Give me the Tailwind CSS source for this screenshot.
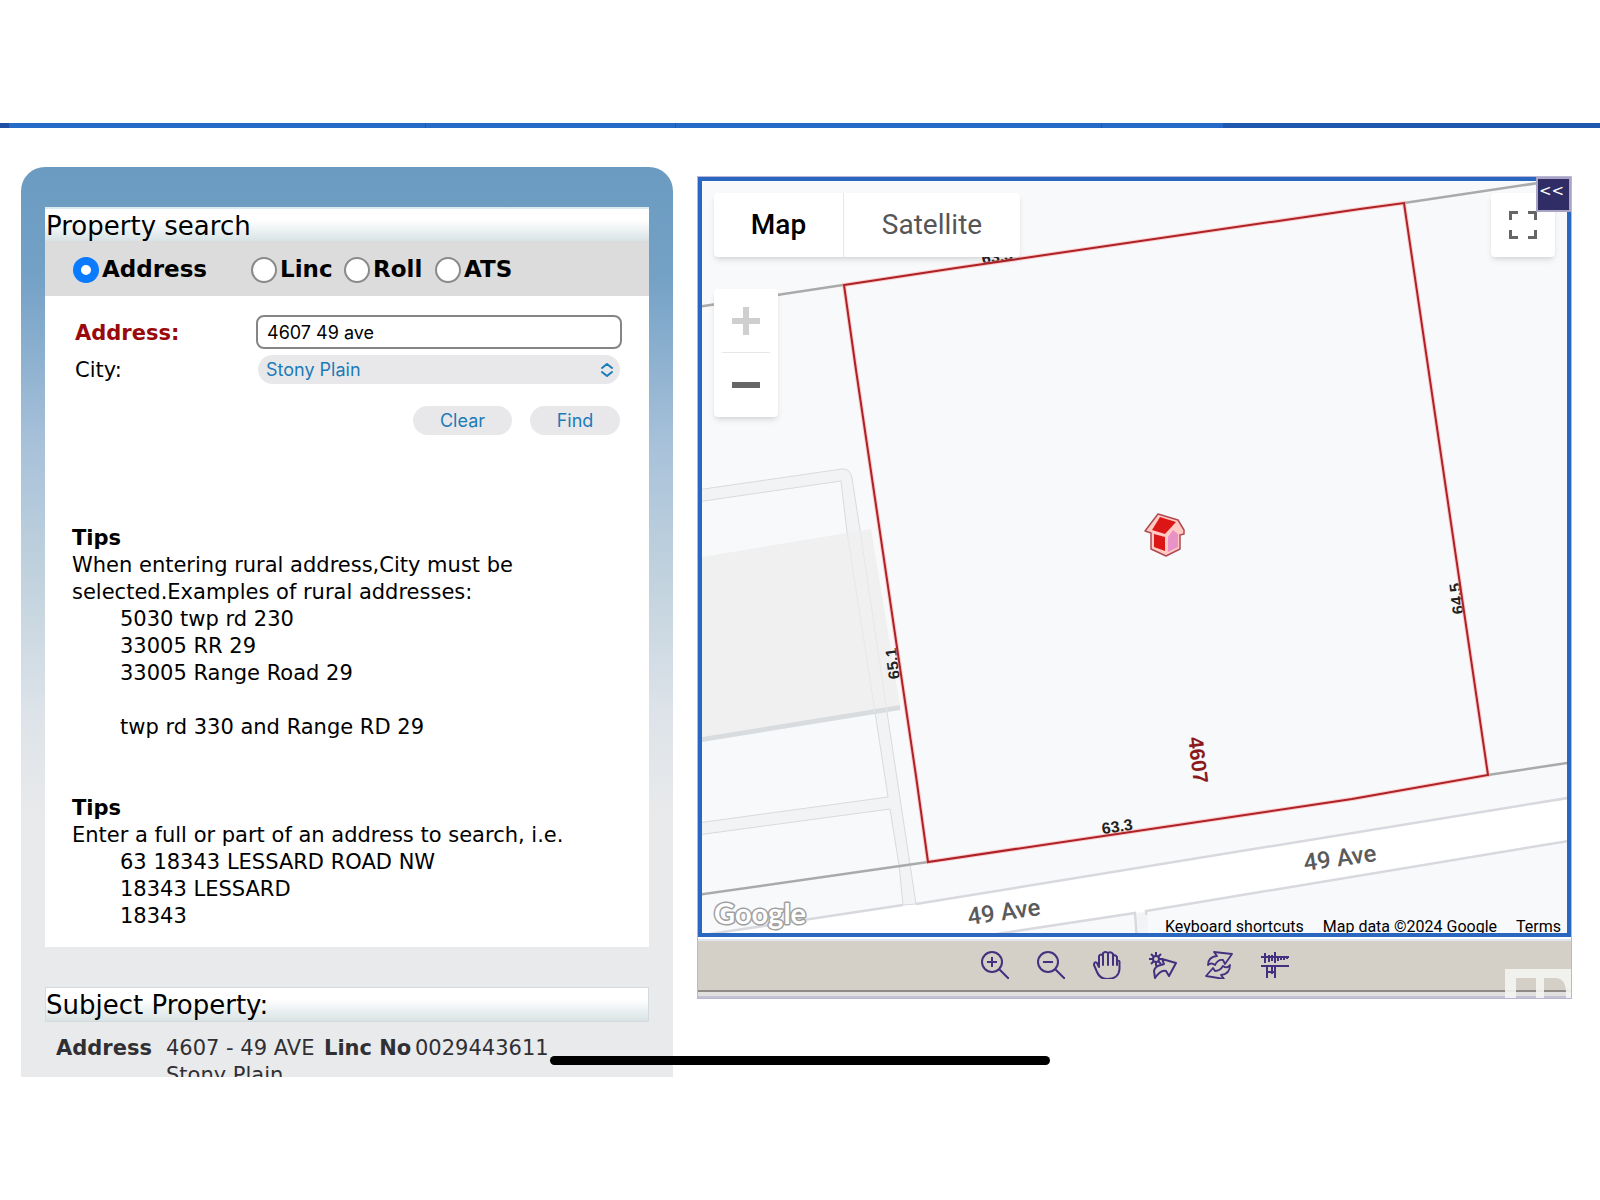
<!DOCTYPE html>
<html lang="en">
<head>
    <meta charset="UTF-8">
    <meta name="viewport" content="width=device-width, initial-scale=1.0">
    <title>Property search</title>
    <script src="https://cdn.jsdelivr.net/npm/@tailwindcss/browser@4"></script>
</head>
<body class="min-h-screen bg-white font-['DejaVu_Sans',sans-serif] text-black">
    <!-- Top strip -->
    <header class="pt-[123px]">
        <div class="flex h-[5px] bg-[#266ac8]">
            <div class="w-[9px] bg-[#1f4fa3]"></div>
            <div class="w-[417px] border-r border-[#1f58b0]"></div>
            <div class="w-[250px] border-r border-[#1f58b0]"></div>
            <div class="w-[426px] border-r border-[#1f58b0]"></div>
            <div class="w-[121px]"></div>
            <div class="flex-1 bg-[#1f56ae]"></div>
        </div>
    </header>

    <main class="relative grid grid-cols-[652fr_875fr] items-start gap-6 pt-[39px] pr-7 pl-[21px]">
        <!-- Search panel -->
        <section class="h-[910px] overflow-hidden rounded-t-3xl bg-[linear-gradient(180deg,#6b9bc1_0%,#74a1c6_12%,#a9c2da_31%,#bfd1dd_44%,#dde3e9_60%,#e9eaeb_72%)] px-6 pt-10">
            <form class="bg-white" onsubmit="return false">
                <h1 class="h-[34px] border-t-2 border-[#dcebf2] bg-linear-to-b from-white from-35% to-[#d8e3e5] pl-px text-[26px] leading-[34px]">Property search</h1>
                <div class="flex h-[55px] items-center bg-[#dcdcdc] pt-0.5 pl-7 text-[23px] font-bold">
                    <label class="flex w-[178px] items-center gap-[3px]">
                        <input type="radio" name="kind" checked class="size-[26px] appearance-none rounded-full border-2 border-[#8a8a8a] bg-white checked:border-8 checked:border-[#0a7aff]">Address
                    </label>
                    <label class="flex w-[93px] items-center gap-[3px]">
                        <input type="radio" name="kind" class="size-[26px] appearance-none rounded-full border-2 border-[#8a8a8a] bg-white checked:border-8 checked:border-[#0a7aff]">Linc
                    </label>
                    <label class="flex w-[91px] items-center gap-[3px]">
                        <input type="radio" name="kind" class="size-[26px] appearance-none rounded-full border-2 border-[#8a8a8a] bg-white checked:border-8 checked:border-[#0a7aff]">Roll
                    </label>
                    <label class="flex items-center gap-[3px]">
                        <input type="radio" name="kind" class="size-[26px] appearance-none rounded-full border-2 border-[#8a8a8a] bg-white checked:border-8 checked:border-[#0a7aff]">ATS
                    </label>
                </div>

                <div class="grid grid-cols-[181px_1fr] items-center gap-y-1.5 pt-[19px] pr-[27px] pl-[30px] text-[21px] leading-[27px]">
                    <label for="address" class="pt-0.5 font-bold text-[#990a0a]">Address:</label>
                    <input id="address" type="text" value="4607 49 ave" class="h-[34px] w-full rounded-lg border-2 border-[#858585] bg-white px-[9px] font-['Inter',sans-serif] text-[18px] leading-7">
                    <label for="city" class="pt-0.5">City:</label>
                    <div class="relative mx-0.5">
                        <select id="city" class="block h-[29px] w-full appearance-none rounded-full bg-[#e8e8ea] px-2 font-['Inter',sans-serif] text-[18px] leading-7 text-[#1c7bb8]">
                            <option>Stony Plain</option>
                        </select>
                        <svg class="pointer-events-none absolute top-2 right-[7px] h-[14px] w-3" viewBox="0 0 12 14" fill="none" stroke="#1c7bb8" stroke-width="2" stroke-linecap="round" stroke-linejoin="round"><path d="M1 5l5-4 5 4M1 9l5 4 5-4"/></svg>
                    </div>
                </div>
                <div class="flex justify-end gap-[18px] pt-[22px] pr-[29px] font-['Inter',sans-serif] text-[18px] text-[#1c7bb8]">
                    <button type="reset" class="h-[29px] w-[99px] rounded-full bg-[#e8e8ea] leading-7">Clear</button>
                    <button type="submit" class="h-[29px] w-[90px] rounded-full bg-[#e8e8ea] leading-7">Find</button>
                </div>

                <div class="pt-[90px] pb-[17px] pl-[27px] text-[21px] leading-[27px]">
                    <h2 class="font-bold">Tips</h2>
                    <p>When entering rural address,City must be<br>selected.Examples of rural addresses:</p>
                    <ul class="pl-12">
                        <li>5030 twp rd 230</li>
                        <li>33005 RR 29</li>
                        <li>33005 Range Road 29</li>
                        <li class="pt-[27px]">twp rd 330 and Range RD 29</li>
                    </ul>
                    <h2 class="pt-[54px] font-bold">Tips</h2>
                    <p>Enter a full or part of an address to search, i.e.</p>
                    <ul class="pl-12">
                        <li>63 18343 LESSARD ROAD NW</li>
                        <li>18343 LESSARD</li>
                        <li>18343</li>
                    </ul>
                </div>
            </form>

            <h1 class="mt-10 h-[35px] border border-[#d5dadd] bg-linear-to-b from-white from-35% to-[#d8e3e5] text-[26px] leading-[34px]">Subject Property:</h1>
            <table class="mt-[13px] ml-[11px] text-left align-top text-[21px] leading-[27px] text-[#303034]">
                <tr class="align-top">
                    <th class="w-[110px] p-0">Address</th>
                    <td class="w-[158px] p-0 whitespace-nowrap">4607 - 49 AVE<br>Stony Plain</td>
                    <th class="w-[91px] p-0 whitespace-nowrap">Linc No</th>
                    <td class="p-0">0029443611</td>
                </tr>
            </table>
        </section>

        <!-- Map -->
        <section class="relative mt-[9px] border border-[#b9b6d8]">
            <div class="relative h-[760px] overflow-hidden border-4 border-[#2a67c0] bg-[#f8f9fb] font-['Roboto',sans-serif]">
                <svg class="absolute inset-0 size-full" viewBox="702 181 865 752" preserveAspectRatio="xMidYMid slice">
                    <!-- road -->
                    <path d="M690 937L903 905L916 904L1580 797V839L1146 911L1135 913L1000 934V950H690Z" fill="#fff"/>
                    <!-- lanes -->
                    <path d="M690 491L842 469Q850 468 852 478L860 530L887 712L916 904L903 905L899 865L890 809L690 836V824L888 797L875 712L847 532L841 481L690 503Z" fill="#f2f3f5" stroke="#d9dadd"/>
                    <path d="M690 559L871 529L900 705L690 739Z" fill="#f0f0f0"/>
                    <path d="M690 739L900 705V710L690 744Z" fill="#d9dcdf"/>
                    <path d="M847 532L875 712M860 530L887 712" fill="none" stroke="#e7e8ea"/>
                    <path d="M690 937L903 905M916 904L1580 796" fill="none" stroke="#d8d9de" stroke-width="2.5"/>
                    <path d="M990 935L1135 913L1137 940M1147 940L1146 911L1580 839" fill="none" stroke="#d8d9de" stroke-width="2.5"/>
                    <path d="M1137 914L1145 912L1146 940H1138Z" fill="#f2f3f5"/>
                    <!-- neighbour parcel lines -->
                    <path d="M690 308L843 285M1404 203L1545 182M1488 775L1580 761M928 862L690 896" fill="none" stroke="#aaa" stroke-width="2.5"/>
                    <!-- street and dimension labels -->
                    <g font-family="Liberation Sans, sans-serif" font-weight="bold" font-size="16" fill="#222" text-anchor="middle">
                        <text transform="translate(998 262) rotate(-8)">63.3</text>
                        <text transform="translate(1118 832) rotate(-8)">63.3</text>
                        <text transform="translate(898 663) rotate(-97)">65.1</text>
                        <text transform="translate(1462 598) rotate(-97)">64.5</text>
                        <text transform="translate(1191 761) rotate(83)" font-size="21" fill="#8c1a1c">4607</text>
                    </g>
                    <g font-family="Roboto, sans-serif" font-weight="500" font-size="24" fill="#5a5a5c" text-anchor="middle">
                        <text transform="translate(1005 920) rotate(-8)">49 Ave</text>
                        <text transform="translate(1341 866) rotate(-8)">49 Ave</text>
                    </g>
                    <!-- subject parcel -->
                    <path d="M844 285L956 268L1360 209L1404 203L1488 775L1352 799L928 862L916 776L856 370Z" fill="none" stroke="#ff9c9c" stroke-opacity=".5" stroke-width="4"/>
                    <path d="M844 285L956 268L1360 209L1404 203L1488 775L1352 799L928 862L916 776L856 370Z" fill="none" stroke="#ad2226" stroke-width="2"/>
                    <!-- house marker -->
                    <g stroke-linejoin="round">
                        <path d="M1145 531L1158 514L1178 520L1184 530V534L1180 535V549L1166 556L1151 549V533Z" fill="#ffc9c4" stroke="#b04a50" stroke-width="1.5"/>
                        <path d="M1152 530L1160 517L1176 522L1165 534Z" fill="#dc1616"/>
                        <path d="M1154 534L1165 537V551L1154 547Z" fill="#dc1616"/>
                        <path d="M1168 537L1173 530L1178 534V547L1168 552Z" fill="#e892c8"/>
                    </g>
                    <text x="714" y="924" font-family="Lato, sans-serif" font-weight="bold" font-size="29" fill="#fff" stroke="#a0a0a0" stroke-width="3" stroke-linejoin="round" paint-order="stroke">Google</text>
                </svg>

                <div class="absolute top-3 left-3 flex h-16 rounded-sm bg-white text-[28px] shadow-md">
                    <button class="w-[130px] border-r border-[#e6e6e6] font-medium">Map</button>
                    <button class="w-[176px] text-[#565656]">Satellite</button>
                </div>
                <div class="absolute top-[108px] left-3 flex w-16 flex-col items-center rounded-sm bg-white shadow-md">
                    <button aria-label="Zoom in" class="flex h-16 w-12 items-center justify-center border-b border-[#e6e6e6]">
                        <svg class="size-7" viewBox="0 0 28 28" fill="#cfcfcf"><path d="M11 0h6v11h11v6H17v11h-6V17H0v-6h11z"/></svg>
                    </button>
                    <button aria-label="Zoom out" class="flex h-16 w-12 items-center justify-center">
                        <svg class="size-7" viewBox="0 0 28 28" fill="#666"><path d="M0 11h28v6H0z"/></svg>
                    </button>
                </div>
                <button aria-label="Fullscreen" class="absolute top-3 right-3 flex size-16 items-center justify-center rounded-sm bg-white shadow-md">
                    <svg class="size-7" viewBox="0 0 28 28" fill="none" stroke="#666" stroke-width="3"><path d="M1.500 9V1.500H9M19 1.500h7.500V9M26.500 19v7.500H19M9 26.500H1.500V19"/></svg>
                </button>
                <div class="absolute right-0 -bottom-1.5 flex gap-[19px] bg-[#f8f9fb]/80 pr-1.5 pl-5 text-[16px] leading-6">
                    <button>Keyboard shortcuts</button>
                    <span>Map data ©2024 Google</span>
                    <a href="#">Terms</a>
                </div>
            </div>
            <button class="absolute top-0 right-0 h-[35px] w-[35px] border-2 border-[#a9a3c4] bg-[#2f2c66] pr-1 pb-2 text-[15px] leading-5 text-white">&lt;&lt;</button>

            <!-- Map tools -->
            <div class="mt-0.5 flex h-[53px] items-center justify-center gap-7 border-t-2 border-b-2 border-t-[#dfe6ee] border-b-[#8f8c88] bg-[#d4d0c8] pb-0.5 text-[#43307e]">
                <button aria-label="Zoom in"><svg class="size-7" viewBox="0 0 28 28" fill="none" stroke="currentColor" stroke-width="2"><circle cx="11" cy="11" r="10"/><path d="M18 18l10 10M11 6v10M6 11h10"/></svg></button>
                <button aria-label="Zoom out"><svg class="size-7" viewBox="0 0 28 28" fill="none" stroke="currentColor" stroke-width="2"><circle cx="11" cy="11" r="10"/><path d="M18 18l10 10M6 11h10"/></svg></button>
                <button aria-label="Pan"><svg class="size-7" viewBox="0 0 28 28" fill="none" stroke="currentColor" stroke-width="2" stroke-linecap="round" stroke-linejoin="round"><path d="M6 16V5Q8 2 10 5V14M10 5V2Q12.500 0 15 2V14M15 2Q17.500 0 20 3V14M20 5Q22 3 24 6V14M24 10Q27 9 26.500 12V18Q26 28 14 28Q7 28 4 21L1 14Q1 10 4 12L6 16"/></svg></button>
                <button aria-label="Previous view"><svg class="size-7" viewBox="0 0 28 28" fill="none" stroke="currentColor" stroke-width="2" stroke-linejoin="round"><circle cx="7" cy="8" r="3"/><path d="M7 1v4M7 11v4M0 8h4M10 8h4M2 3l3 3M12 3L9 6M2 13l3-3M12 13l-3-3"/><path d="M13 8L27 12L20 25L17 20Q12 18 6 27L5 20Q6 15 12 14L15 13Z"/></svg></button>
                <button aria-label="Refresh"><svg class="size-7" viewBox="0 0 28 28" fill="none" stroke="currentColor" stroke-width="1.800" stroke-linejoin="round"><path d="M3 14Q3 6 12 5L9 1L27 3L20 13L18 9Q13 8 10 14Q6 11 3 14Z"/><path d="M25 14Q25 23 16 24L19 28L1 25L8 17L10 20Q15 20 18 15Q22 18 25 14Z"/></svg></button>
                <button aria-label="Measure"><svg class="size-7" viewBox="0 0 28 28" fill="none" stroke="currentColor" stroke-width="2"><path d="M0 6h28M0 15h28M4 2v10M8 4v7M11 4v6M14 1v11M17 5v5M20 5v4M23 5v4M26 5v3M6 15v12M14 15v12M6 21h8M11 15v8"/></svg></button>
            </div>
            <div class="h-[6px] border-b-2 border-[#c4c2d2] bg-[#e2e0de]"></div>
            <svg class="absolute right-0 bottom-0 h-[29px] w-[66px]" viewBox="0 0 66 29" fill="#f4f4f2" fill-opacity=".9" fill-rule="evenodd"><path d="M0 0H66V29H0ZM11 9H31V29H11ZM39 9H51Q61 10 61 24V29H39Z"/></svg>
        </section>

        <div class="absolute bottom-3 left-1/2 h-[9px] w-[500px] -translate-x-1/2 rounded-full bg-black"></div>
    </main>
</body>
</html>
